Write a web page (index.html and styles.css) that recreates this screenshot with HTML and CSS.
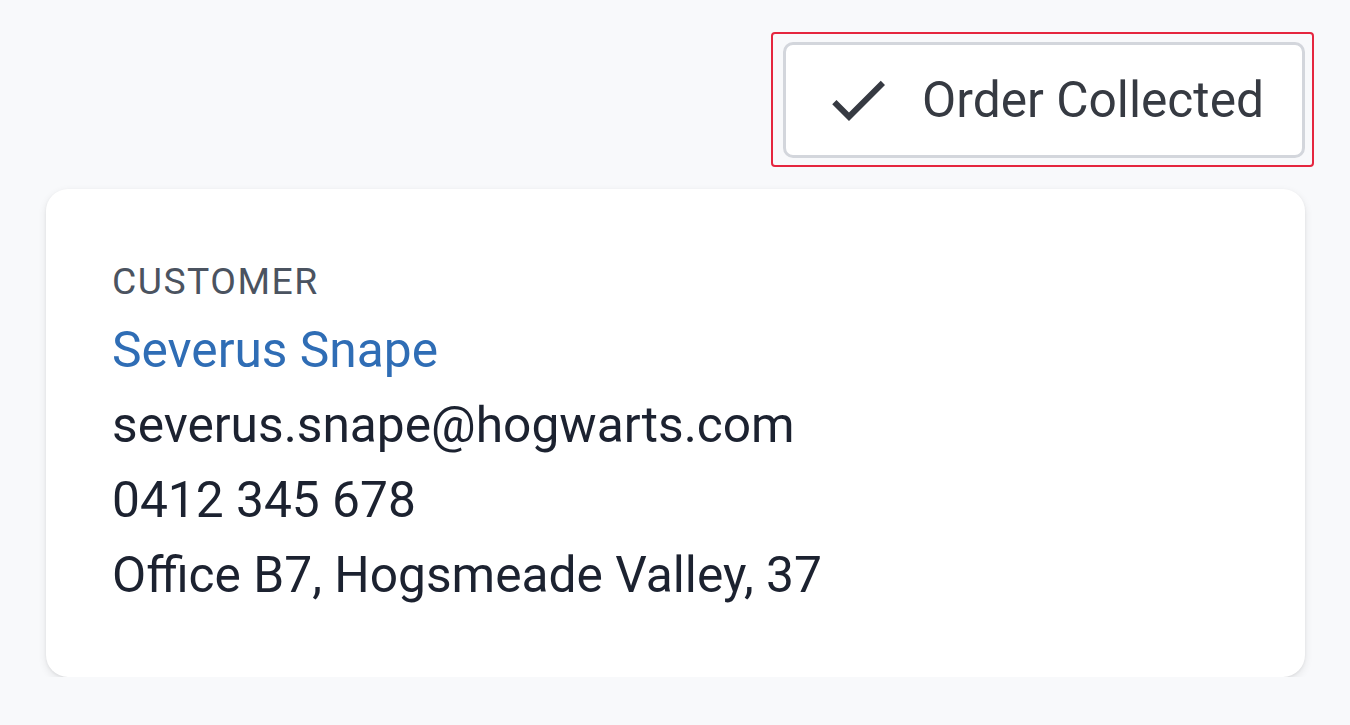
FILE: index.html
```html
<!DOCTYPE html>
<html lang="en">
<head>
<meta charset="utf-8">
<title>Order</title>
<link rel="stylesheet" href="styles.css">
</head>
<body>
<div class="page">
  <button class="collect-btn" type="button">
    <svg class="check" viewBox="0 0 24 24" aria-hidden="true"><path d="M9 16.17L4.83 12l-1.42 1.41L9 19 21 7l-1.41-1.41z"/></svg>
    <span class="btn-label">Order Collected</span>
  </button>
  <section class="card">
    <div class="label">CUSTOMER</div>
    <a class="name" href="#">Severus Snape</a>
    <div class="line">severus.snape@hogwarts.com</div>
    <div class="line">0412 345 678</div>
    <div class="line">Office B7, Hogsmeade Valley, 37</div>
  </section>
</div>
</body>
</html>
```

FILE: styles.css
```css
html, body {
  margin: 0;
  padding: 0;
  background: #f8f9fb;
  font-family: Roboto, "Liberation Sans", Arial, sans-serif;
}

.page {
  display: flex;
  flex-direction: column;
  padding: 42px 45px 0 46px;
  gap: 31px;
}

.collect-btn {
  position: relative;
  align-self: flex-end;
  display: flex;
  align-items: center;
  gap: 28px;
  height: 116px;
  padding: 0 38px 0 36px;
  background: #fff;
  border: 3px solid #d3d6dc;
  border-radius: 10px;
  outline: none;
  font-family: inherit;
  font-size: 49.7px;
  color: #363a42;
  cursor: pointer;
}

.collect-btn::after {
  content: "";
  position: absolute;
  top: -13px;
  right: -12px;
  bottom: -12px;
  left: -15px;
  border: 2px solid #e5263f;
  border-radius: 4px;
  pointer-events: none;
}

.check {
  width: 72px;
  height: 72px;
  fill: #363a42;
  flex: none;
}

.btn-label {
  line-height: 72px;
}

.card {
  display: flex;
  flex-direction: column;
  background: #fff;
  border-radius: 22px;
  box-shadow: 0 3px 8px rgba(0, 0, 0, 0.09), 0 1px 3px rgba(0, 0, 0, 0.06);
  padding: 68px 66px 64px 66px;
}

.label {
  font-size: 37.3px;
  line-height: 48px;
  letter-spacing: 1.5px;
  color: #4b5360;
  margin-bottom: 8px;
}

.name {
  font-size: 49.7px;
  line-height: 75px;
  color: #2f6db5;
  text-decoration: none;
  align-self: flex-start;
}

.line {
  font-size: 49.7px;
  line-height: 75px;
  color: #1c2230;
}
```
